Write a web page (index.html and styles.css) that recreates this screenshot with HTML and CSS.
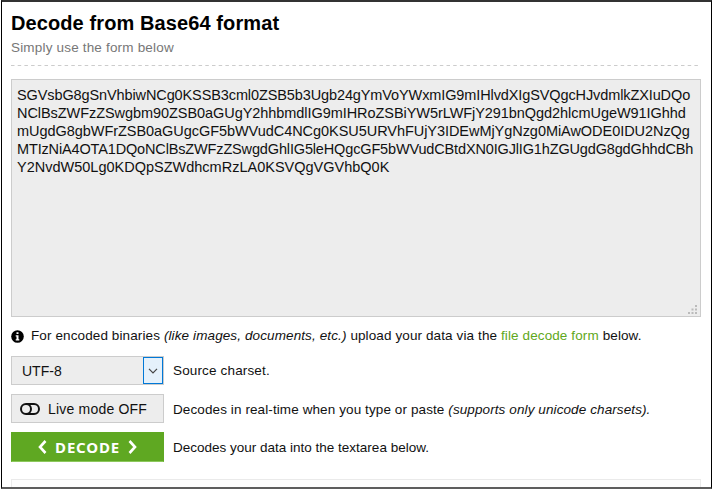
FILE: index.html
```html
<!DOCTYPE html>
<html lang="en">
<head>
<meta charset="utf-8">
<title>Decode from Base64 format</title>
<link rel="stylesheet" href="styles.css">
</head>
<body>
<main class="frame">
  <header class="heading">
    <h1>Decode from Base64 format</h1>
    <p>Simply use the form below</p>
  </header>
  <svg class="divider" width="689" height="1"><path d="M0 .5H689" stroke="#ccc" stroke-dasharray="3.5 3.2"/></svg>
  <div class="input">
    <div><span class="l1">SGVsbG8gSnVhbiwNCg0KSSB3cml0ZSB5b3Ugb24gYmVoYWxmIG9mIHlvdXIgSVQgcHJvdmlkZXIuDQo</span></div>
    <div><span class="l2">NClBsZWFzZSwgbm90ZSB0aGUgY2hhbmdlIG9mIHRoZSBiYW5rLWFjY291bnQgd2hlcmUgeW91IGhhd</span></div>
    <div><span class="l3">mUgdG8gbWFrZSB0aGUgcGF5bWVudC4NCg0KSU5URVhFUjY3IDEwMjYgNzg0MiAwODE0IDU2NzQg</span></div>
    <div><span class="l4">MTIzNiA4OTA1DQoNClBsZWFzZSwgdGhlIG5leHQgcGF5bWVudCBtdXN0IGJlIG1hZGUgdG8gdGhhdCBh</span></div>
    <div><span class="l5">Y2NvdW50Lg0KDQpSZWdhcmRzLA0KSVQgVGVhbQ0K</span></div>
    <svg class="grip" width="10" height="10" fill="#bbb"><path d="M7 0h2v2H7zM3.5 3.5h2v2h-2zM7 3.5h2v2H7zM0 7h2v2H0zM3.5 7h2v2h-2zM7 7h2v2H7z"/></svg>
  </div>
  <p class="note"><svg width="13" height="13" viewBox="0 0 13 13"><circle cx="6.5" cy="6.5" r="6.3"/><path d="M5.5 2.2h2v1.9h-2zM4.7 5.2h2.8v4h.8v1.3H4.7V9.2h.8V6.5h-.8z" fill="#fff"/></svg><span class="note-text">For encoded binaries <i>(like images, documents, etc.)</i> upload your data via the <a>file decode form</a> below.</span></p>
  <div class="row charset">
    <div class="control select"><span>UTF-8</span><b class="arrow"><svg width="10" height="6" viewBox="0 0 10 6"><path d="M1 .8l4 4 4-4" fill="none" stroke="#444" stroke-width="1.2"/></svg></b></div>
    <span class="label d1">Source charset.</span>
  </div>
  <div class="row live">
    <div class="control toggle"><svg width="20" height="12" viewBox="0 0 20 12" fill="none" stroke="#111" stroke-width="2"><path d="M6 1h8a5 5 0 0 1 0 10H6"/><circle cx="6" cy="6" r="5"/></svg><span>Live mode OFF</span></div>
    <span class="label d2">Decodes in real-time when you type or paste <i>(supports only unicode charsets).</i></span>
  </div>
  <div class="row decode">
    <div class="control button"><svg width="9" height="14" viewBox="0 0 9 14"><path d="M7.500 1L2 7l5.500 6"/></svg><span>DECODE</span><svg width="9" height="14" viewBox="0 0 9 14"><path d="M1.500 1L7 7l-5.500 6"/></svg></div>
    <span class="label d3">Decodes your data into the textarea below.</span>
  </div>
  <div class="output"></div>
</main>
</body>
</html>
```
FILE: styles.css
```css
* { box-sizing: border-box; }
body {
  margin: 0;
  background: #fff;
  color: #111;
  font: 13.5px/16px "Liberation Sans", Arial, sans-serif;
  overflow: hidden;
}
h1, p { margin: 0; }
.frame {
  width: 711px;
  height: 489px;
  margin-left: 1px;
  padding: 10px 10px 0 9px;
  border: solid #000;
  border-width: 2px 1px 2px 1px;
  border-top-color: #333;
  border-bottom-color: #5c5c5c;
  overflow: hidden;
}
.heading { height: 53px; }
h1 {
  font-size: 20px;
  line-height: 23px;
  letter-spacing: .1px;
  white-space: nowrap;
  color: #000;
}
.heading p { margin-top: 5px; color: #777; letter-spacing: .18px; }
.divider { display: block; }
.input {
  position: relative;
  height: 238px;
  margin-top: 13px;
  padding: 6px 5px;
  border: 1px solid #ccc;
  background: #ededed;
  font-size: 14.5px;
  line-height: 18px;
  white-space: nowrap;
}
.l1 { letter-spacing: -.11px; }
.l2 { letter-spacing: -.06px; }
.l3 { letter-spacing: -.05px; }
.l4 { letter-spacing: -.15px; }
.grip { position: absolute; right: 2px; bottom: 1px; }
.note { display: flex; align-items: center; height: 16px; margin-top: 11px; white-space: nowrap; letter-spacing: .11px; }
.note-text { margin-left: 7px; }
.note a { color: #5fa820; }
.row { display: flex; align-items: center; gap: 9px; }
.charset { margin-top: 12px; height: 29px; }
.live { margin-top: 9px; height: 29px; }
.decode { margin-top: 9px; height: 30px; }
.label { white-space: nowrap; }
.d1 { letter-spacing: .15px; }
.d2 { letter-spacing: .1px; padding-top: 2px; }
.d3 { padding-top: 2px; }
.control {
  display: flex;
  align-items: center;
  flex: none;
  width: 153px;
  height: 100%;
  border: 1px solid #ccc;
  background: #ededed;
  font-size: 14px;
}
.select { justify-content: space-between; padding-left: 10px; }
.arrow {
  display: flex;
  align-items: center;
  justify-content: center;
  width: 20px;
  height: 27px;
  border: 1px solid #0078d7;
  background: #e5f1fb;
}
.toggle { padding-left: 8px; }
.toggle span { margin-left: 8px; letter-spacing: .2px; }
.button {
  justify-content: center;
  gap: 8px;
  border-color: #5fa822 #5fa822 #8cc85c;
  background: #5fa822;
  color: #fff;
  font: bold 15px/18px "Noto Sans", sans-serif;
  letter-spacing: .8px;
}
.button path { fill: none; stroke: #fff; stroke-width: 2.6; }
.output { height: 20px; margin-top: 17px; border: 1px solid #eaeaea; background: #fcfcfc; }
```
